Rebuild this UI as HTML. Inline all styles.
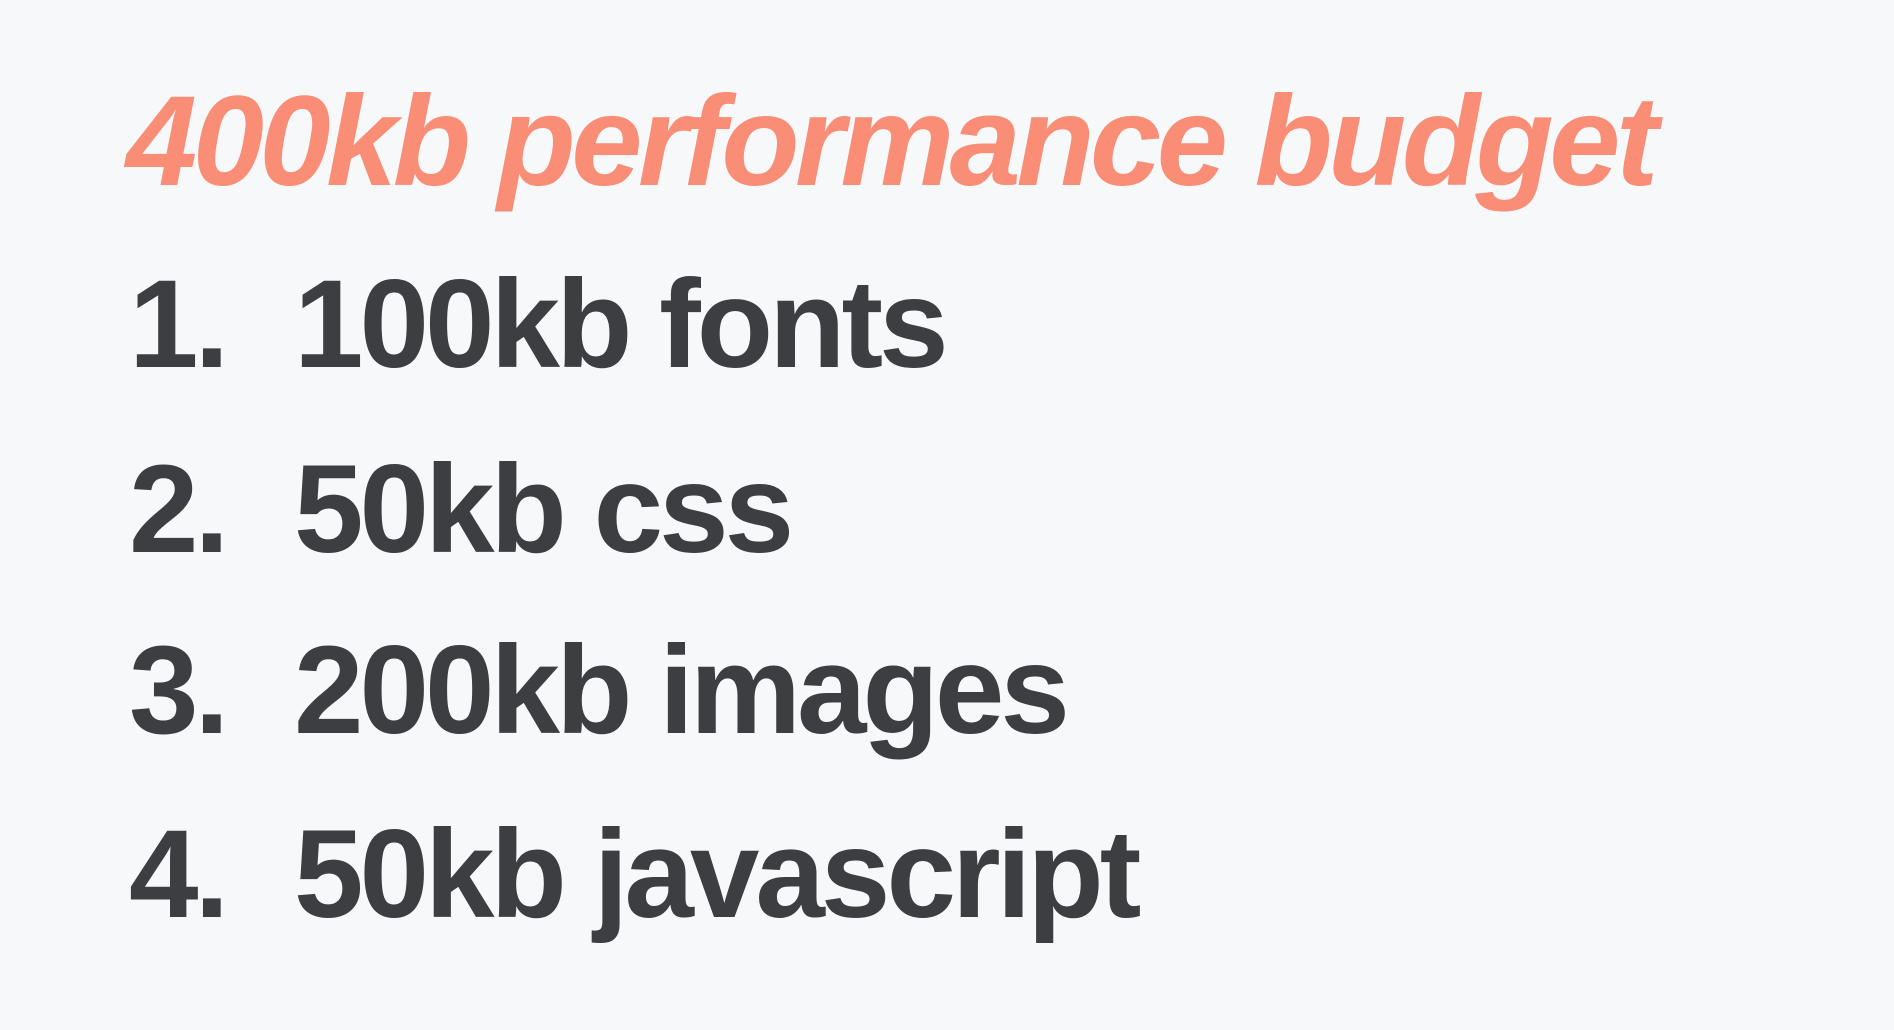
<!DOCTYPE html>
<html><head><style>
html,body{margin:0;padding:0;width:1894px;height:1030px;overflow:hidden;background:#f6f8fa;}
.t{position:absolute;white-space:nowrap;font-family:"Liberation Sans",sans-serif;font-weight:bold;line-height:1;}
.title{left:126px;top:78px;font-size:128px;font-style:italic;color:#f98d76;letter-spacing:-4.5px;}
.n,.i{font-size:125px;color:#3d3e41;letter-spacing:-4px;}
.n{left:129px}.i{left:294px}
</style></head><body>
<div class="t title">400kb performance budget</div>
<div class="t n" style="top:262px">1.</div><div class="t i" style="top:262px">100kb fonts</div>
<div class="t n" style="top:447px">2.</div><div class="t i" style="top:447px">50kb css</div>
<div class="t n" style="top:628px">3.</div><div class="t i" style="top:628px">200kb images</div>
<div class="t n" style="top:812px">4.</div><div class="t i" style="top:812px">50kb javascript</div>
</body></html>
